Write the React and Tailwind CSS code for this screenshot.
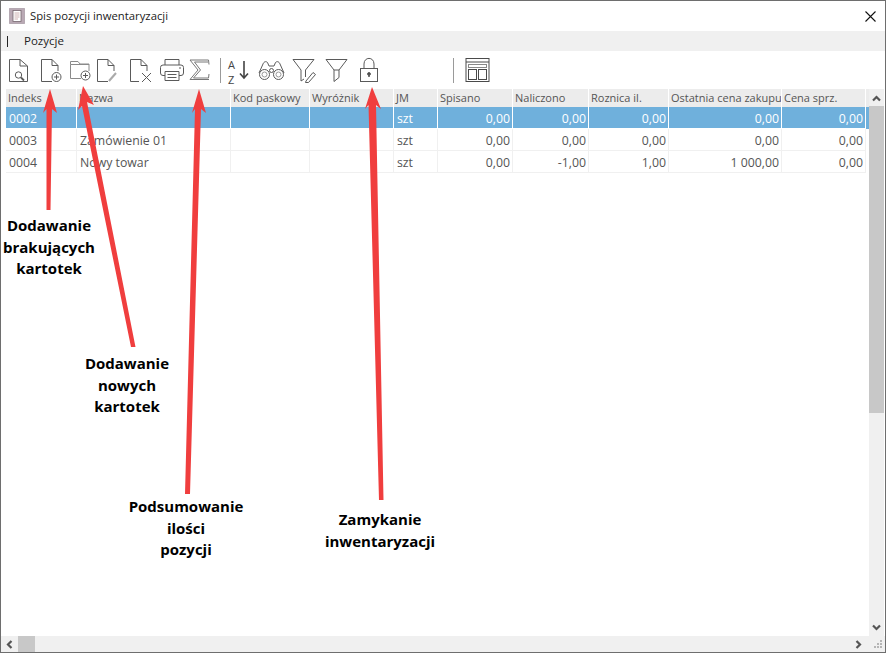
import React from 'react';

const COLS = 'grid grid-cols-[71px_154px_79px_84px_44px_75px_76px_80px_113px_84px]';
const UI_FONT = 'font-["Open_Sans",sans-serif]';

const HEADERS = ['Indeks', 'Nazwa', 'Kod paskowy', 'Wyróżnik', 'JM', 'Spisano', 'Naliczono', 'Roznica il.', 'Ostatnia cena zakupu', 'Cena sprz.'];

const ROWS = [
  ['0002', '', '', '', 'szt', '0,00', '0,00', '0,00', '0,00', '0,00'],
  ['0003', 'Zamówienie 01', '', '', 'szt', '0,00', '0,00', '0,00', '0,00', '0,00'],
  ['0004', 'Nowy towar', '', '', 'szt', '0,00', '-1,00', '1,00', '1 000,00', '0,00'],
];

const NOTES = [
  { lines: ['Dodawanie', 'brakujących', 'kartotek'], cls: 'left-[-12px] top-[214px] w-[120px]' },
  { lines: ['Dodawanie', 'nowych', 'kartotek'], cls: 'left-[66px] top-[352px] w-[120px]' },
  { lines: ['Podsumowanie', 'ilości', 'pozycji'], cls: 'left-[125px] top-[495px] w-[120px]' },
  { lines: ['Zamykanie', 'inwentaryzacji'], cls: 'left-[319px] top-[508px] w-[120px]' },
];

const ARROWS = [
  '50,89 57,113 52,109 50.5,210 46.5,210 46.5,109 43,113',
  '83,86 94,105 87,102 135.5,347 131,347 82,106 78,110',
  '199,89 206,113 201,109 190,494 185,494 195,109 192,113',
  '372,87 381,109 376,105 383.5,500 379,500 368.5,105 365,109',
];

function Icon({ w, children, className = '' }) {
  return (
    <svg width={w} height="26" viewBox={`0 0 ${w} 26`} fill="none" stroke="#5a5a5a" strokeWidth="1" className={`shrink-0 ${className}`}>
      {children}
    </svg>
  );
}

function Toolbar() {
  return (
    <div className="flex h-[38px] shrink-0 items-center bg-white pl-[7px]">
      <Icon w={22}>
        <path d="M1.5 2.5H12L19.5 9V24.5H1.5Z" />
        <path d="M12 2.5V9H19.5" />
        <circle cx="10.5" cy="18" r="3.2" />
        <path d="M13 20.5L16 23.5" strokeWidth="1.8" />
      </Icon>
      <Icon w={24} className="ml-[9px]">
        <path d="M13 24.5H2.5V2.5H13L19 8.5V14" />
        <path d="M13 2.5V8.5H19" />
        <circle cx="17.5" cy="20" r="4.5" />
        <path d="M15 20H20M17.5 17.5V22.5" />
      </Icon>
      <Icon w={24} className="ml-[6px]">
        <path d="M12 21.5H1.5V7.5V4.5H9L11 7H20V14" stroke="#8a8a8a" />
        <path d="M1.5 7.5H20" stroke="#8a8a8a" />
        <circle cx="16.5" cy="18.5" r="4.5" />
        <path d="M14 18.5H19M16.5 16V21" />
      </Icon>
      <Icon w={24} className="ml-[2px]">
        <path d="M13 24.5H2.5V2.5H13L19 8.5V14" />
        <path d="M13 2.5V8.5H19" />
        <path d="M14 24L21 16" stroke="#aaa" strokeWidth="2" />
      </Icon>
      <Icon w={24} className="ml-[9px]">
        <path d="M11 24.5H2.5V2.5H13L19 8.5V14" />
        <path d="M13 2.5V8.5H19" />
        <path d="M14 16L23 25M23 16L14 25" />
      </Icon>
      <Icon w={26} className="ml-[7px]">
        <path d="M6 8V2.5H20V8" />
        <rect x="1.5" y="8" width="23" height="10.5" rx="2.5" />
        <path d="M6 14.5V23.5H20V14.5Z" fill="white" />
        <path d="M8.5 17.5H17.5M8.5 20.5H17.5" />
        <path d="M20 11H22" />
      </Icon>
      <Icon w={22} className="ml-[3px]">
        <path d="M2 3H20.5L21 7.5M20 5H6.5L12.5 13L5.5 21H20.5L21 17M2 3L10 13L2 22.5H21" stroke="#777" />
      </Icon>
      <div className="ml-[10px] h-[25px] w-px bg-[#9a9a9a]" />
      <div className="relative ml-[7px] h-[26px] w-[22px] shrink-0 text-[#444]">
        <span className={`absolute left-0 top-[1.5px] text-[11px] leading-[11px] ${UI_FONT}`}>A</span>
        <span className={`absolute left-0 top-[16.5px] text-[11px] leading-[11px] ${UI_FONT}`}>Z</span>
        <svg width="10" height="20" viewBox="0 0 10 20" fill="none" stroke="#444" strokeWidth="1.6" className="absolute left-[11px] top-[3px]">
          <path d="M5 1V18M1 13.5L5 18L9 13.5" />
        </svg>
      </div>
      <Icon w={27} className="ml-[8px]">
        <path d="M5 7C6 4.5 8 4 9.5 5.5L11 9H16L17.5 5.5C19 4 21 4.5 22 7L26 16" />
        <path d="M5 7L1 16" />
        <circle cx="6.5" cy="17.5" r="5" />
        <circle cx="20.5" cy="17.5" r="5" />
        <circle cx="13.5" cy="13.5" r="2" />
        <circle cx="6.5" cy="17.5" r="2.5" stroke="#999" />
        <circle cx="20.5" cy="17.5" r="2.5" stroke="#999" />
      </Icon>
      <Icon w={25} className="ml-[7px]">
        <path d="M1 2.5H22L13.5 13V20M1 2.5L9 13V24L12 22" />
        <path d="M14 24L21 15.5L23.5 17.5L16.5 25.5L13.5 25.5Z" />
      </Icon>
      <Icon w={23} className="ml-[8px]">
        <path d="M1 2.5H22L14 13V20.5L9 24.5V13Z" />
        <path d="M9 13H14" />
      </Icon>
      <Icon w={20} className="ml-[11px]">
        <rect x="1.5" y="11.5" width="17" height="13" />
        <path d="M5 11.5V7C5 -0.5 15 -0.5 15 7V11.5" />
        <circle cx="10" cy="17" r="1.4" fill="#444" />
        <path d="M10 17V20" strokeWidth="1.6" />
      </Icon>
      <div className="ml-[74px] h-[25px] w-px bg-[#9a9a9a]" />
      <Icon w={25} className="ml-[11px]">
        <rect x="1" y="1.5" width="23" height="23" stroke="#4a4a4a" />
        <path d="M1 5H24" stroke="#4a4a4a" />
        <rect x="3.5" y="7.5" width="18" height="3" stroke="#888" />
        <rect x="3.5" y="12.5" width="8" height="10" stroke="#4a4a4a" />
        <rect x="13.5" y="12.5" width="8" height="10" stroke="#4a4a4a" />
      </Icon>
    </div>
  );
}

function Table() {
  return (
    <div className="min-w-0 flex-1 pl-[5px] pt-0">
      <div className={`${COLS} h-[18px] bg-[#ececec] text-[11px] leading-[18px] text-[#555]`}>
        {HEADERS.map((h) => (
          <div key={h} className="overflow-hidden whitespace-nowrap border-r border-white pl-[2px]">{h}</div>
        ))}
      </div>
      {ROWS.map((row, r) => (
        <div
          key={row[0]}
          className={`${COLS} h-[22px] text-[12.3px] leading-[23px] ${r === 0 ? 'bg-[#6fb0dc] text-white' : 'bg-white text-[#555]'}`}
        >
          {row.map((cell, c) => (
            <div
              key={c}
              className={`overflow-hidden whitespace-nowrap border-r border-b ${r === 0 ? 'border-white' : 'border-[#f0f0f0]'} ${c > 4 ? 'pr-[2px] text-right' : 'pl-[3px]'}`}
            >
              {cell}
            </div>
          ))}
        </div>
      ))}
    </div>
  );
}

function Chevron({ d, className }) {
  return (
    <svg width="9" height="9" viewBox="0 0 9 9" fill="none" stroke="#555" strokeWidth="2.2" className={className}>
      <path d={d} />
    </svg>
  );
}

export default function App() {
  return (
    <div className={`relative flex h-[653px] w-[886px] flex-col overflow-hidden border border-[#6e6e6e] bg-white ${UI_FONT}`}>
      {/* pasek tytulu */}
      <div className="flex h-[30px] shrink-0 items-center bg-white pl-[8px] pr-[9px]">
        <svg width="16" height="16" viewBox="0 0 16 16" className="shrink-0">
          <rect x="0.5" y="0.5" width="15" height="15" fill="#b9a9b4" stroke="#8f7f8a" strokeDasharray="1 1" />
          <rect x="4" y="2.5" width="8" height="11" fill="#fff" stroke="#77666f" strokeWidth="0.8" />
          <path d="M5.5 5H10.5M5.5 7H10.5M5.5 9H10.5M5.5 11H9" stroke="#c2a0a0" strokeWidth="0.8" />
        </svg>
        <span className="ml-[5px] text-[11.3px] text-[#222]">Spis pozycji inwentaryzacji</span>
        <svg width="11" height="11" viewBox="0 0 11 11" stroke="#111" strokeWidth="1.1" className="ml-auto">
          <path d="M0.5 0.5L10.5 10.5M10.5 0.5L0.5 10.5" />
        </svg>
      </div>

      {/* menu */}
      <div className="flex h-[20px] shrink-0 items-center bg-[#f0f0f0] pl-[6px] text-[11.5px] text-[#222]">
        <div className="h-[11px] w-px bg-[#222]" />
        <span className="ml-[16px]">Pozycje</span>
      </div>

      <Toolbar />

      <div className="flex min-h-0 flex-1">
        <Table />
        <div className="flex w-[15px] shrink-0 flex-col items-center bg-[#f0f0f0]">
          <Chevron d="M1 6.5L4.5 3L8 6.5" className="mt-[5px] h-[9px] shrink-0" />
          <div className="mt-[3px] h-[307px] w-full bg-[#c8c8c8]" />
          <Chevron d="M1 2.5L4.5 6L8 2.5" className="mt-auto mb-[4px] h-[9px] shrink-0" />
        </div>
        <div className="w-px shrink-0 bg-white" />
      </div>

      {/* dolny pasek przewijania */}
      <div className="flex h-[16px] shrink-0 items-center bg-[#f0f0f0] pl-[4px]">
        <Chevron d="M6.5 1L3 4.5L6.5 8" className="shrink-0" />
        <div className="ml-[4px] h-full w-[17px] bg-[#c8c8c8]" />
        <Chevron d="M2.5 1L6 4.5L2.5 8" className="ml-auto mr-[11px] shrink-0" />
        <svg width="9" height="9" viewBox="0 0 9 9" fill="#b5b5b5" className="mr-[2px] shrink-0">
          <rect x="6" y="0" width="2" height="2" />
          <rect x="3" y="3" width="2" height="2" />
          <rect x="6" y="3" width="2" height="2" />
          <rect x="0" y="6" width="2" height="2" />
          <rect x="3" y="6" width="2" height="2" />
          <rect x="6" y="6" width="2" height="2" />
        </svg>
      </div>

      {/* strzalki i opisy nalozone na zrzut */}
      <svg width="886" height="653" viewBox="0 0 886 653" className="pointer-events-none absolute left-[-1px] top-[-1px]">
        {ARROWS.map((points) => (
          <polygon key={points} points={points} fill="#f03e3e" />
        ))}
      </svg>
      {NOTES.map((note) => (
        <div key={note.lines[0] + note.cls} className={`absolute text-center text-[15px] font-bold leading-[21.5px] text-black ${note.cls}`}>
          {note.lines.map((line) => (
            <div key={line}>{line}</div>
          ))}
        </div>
      ))}
    </div>
  );
}
